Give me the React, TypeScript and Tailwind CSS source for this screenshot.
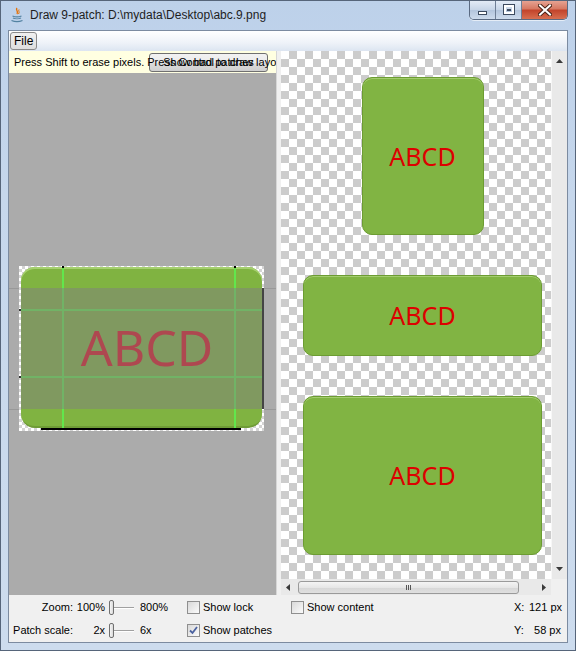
import React from "react";

const checker =
  "bg-[image:conic-gradient(#cccccc_25%,#ffffff_0_50%,#cccccc_0_75%,#ffffff_0)] bg-[length:16px_16px]";

function JavaIcon() {
  return (
    <svg width="14" height="16" viewBox="0 0 14 16">
      <path d="M7 1 C5 3 9 4 7 7" stroke="#e76f00" strokeWidth="1.4" fill="none" />
      <path d="M9 2.5 C8 4 10 5 8.5 7" stroke="#e76f00" strokeWidth="1" fill="none" />
      <path d="M2.5 9 C5 10 9 10 11.5 9" stroke="#5382a1" strokeWidth="1.3" fill="none" />
      <path d="M3 11 C5 12 9 12 11 11" stroke="#5382a1" strokeWidth="1.2" fill="none" />
      <path d="M1.5 13.5 C5 15 9 15 12.5 13.5" stroke="#5382a1" strokeWidth="1.3" fill="none" />
    </svg>
  );
}

function CaptionButtons() {
  return (
    <div className="flex h-[20px] mt-[-1px] rounded-b-[5px] overflow-hidden border border-[#5a6a82] border-t-0 shadow-[0_1px_0_rgba(255,255,255,0.6)]">
      <div className="w-[26px] flex items-center justify-center bg-[linear-gradient(180deg,#e6eef8_0%,#c8d6e8_50%,#b2c4dc_51%,#cddbec_100%)] border-r border-[#6f7f96]">
        <span className="w-[9px] h-[4px] mt-[6px] bg-white border border-[#3c4a5e]" />
      </div>
      <div className="w-[26px] flex items-center justify-center bg-[linear-gradient(180deg,#e6eef8_0%,#c8d6e8_50%,#b2c4dc_51%,#cddbec_100%)] border-r border-[#6f7f96]">
        <span className="w-[10px] h-[9px] border-[2px] border-white outline outline-1 outline-[#3c4a5e] flex items-center justify-center">
          <span className="w-[4px] h-[2px] border border-[#3c4a5e]" />
        </span>
      </div>
      <div className="w-[45px] flex items-center justify-center bg-[linear-gradient(180deg,#e8a898_0%,#d77a64_45%,#c3452c_55%,#d86f50_100%)]">
        <svg width="14" height="12" viewBox="0 0 14 12">
          <path d="M2 1.5 L12 10.5 M12 1.5 L2 10.5" stroke="#4a2418" strokeWidth="4" strokeLinecap="square" />
          <path d="M2 1.5 L12 10.5 M12 1.5 L2 10.5" stroke="#ffffff" strokeWidth="2" strokeLinecap="square" />
        </svg>
      </div>
    </div>
  );
}

function Checkbox({ checked }: { checked?: boolean }) {
  return (
    <span className="w-[13px] h-[13px] border border-[#8f8f8f] bg-[linear-gradient(135deg,#d8d8d8,#fbfbfb)] flex items-center justify-center shrink-0">
      {checked && (
        <svg width="9" height="9" viewBox="0 0 9 9">
          <path d="M1 4.5 L3.5 7 L8 1" stroke="#4b62a0" strokeWidth="1.8" fill="none" />
        </svg>
      )}
    </span>
  );
}

function Slider() {
  return (
    <div className="relative w-[33px] h-[16px] shrink-0">
      <div className="absolute left-[4px] right-[4px] top-[7px] h-[2px] border-t border-[#a0a0a0] border-b border-b-white" />
      <div className="absolute left-[4px] top-0 w-[5px] h-[15px] rounded-[2px] border border-[#707070] bg-[linear-gradient(90deg,#f6f6f6,#dadada)]" />
    </div>
  );
}

function GreenPatch({ className }: { className: string }) {
  return (
    <div
      className={`${className} shrink-0 rounded-[10px] bg-[#81b443] border border-[#6c9c32] shadow-[inset_0_1px_0_#a3cc6e] flex items-center justify-center`}
    >
      <span className="font-['Noto_Sans'] text-[25px] leading-none text-[#dd0000]">ABCD</span>
    </div>
  );
}

function NinePatchCanvas() {
  return (
    <div className="relative overflow-hidden flex-1 bg-[#ababab]">
      <div className="absolute left-0 right-0 top-[215px] h-px bg-[#999999]" />
      <div className="absolute left-0 right-0 top-[336px] h-px bg-[#999999]" />
      <div className="relative mt-[193px] ml-[10px] w-[245px] h-[165px] bg-[image:conic-gradient(#d4d4d4_25%,#ffffff_0_50%,#d4d4d4_0_75%,#ffffff_0)] bg-[length:6px_6px]">
        {/* image */}
        <div className="absolute left-[2px] top-[1px] w-[241px] h-[161px] rounded-[14px] bg-[#80b341] border-b-2 border-[#6f9c36] shadow-[inset_0_2px_0_#a6d070]" />
        <div className="absolute left-[2px] top-[1px] w-[241px] h-[161px] flex items-center justify-center pl-[11px] pb-[1px]">
          <span className="font-['Noto_Sans'] text-[50px] leading-none text-[#dd1020]">ABCD</span>
        </div>
        {/* patch guides */}
        <div className="absolute left-[43px] top-[1px] w-[2px] h-[161px] bg-[#62e64c]" />
        <div className="absolute left-[215px] top-[1px] w-[2px] h-[161px] bg-[#62e64c]" />
        <div className="absolute left-[2px] top-[43px] w-[241px] h-[2px] bg-[#62e64c]" />
        <div className="absolute left-[2px] top-[110px] w-[241px] h-[2px] bg-[#62e64c]" />
        {/* content overlay */}
        <div className="absolute left-[2px] top-[22px] w-[241px] h-[121px] bg-[rgba(128,128,128,0.5)]" />
        {/* border markers */}
        <div className="absolute left-[43px] top-0 w-[2px] h-[2px] bg-black" />
        <div className="absolute left-[215px] top-0 w-[2px] h-[2px] bg-black" />
        <div className="absolute left-0 top-[43px] w-[2px] h-[2px] bg-[#333]" />
        <div className="absolute left-0 top-[110px] w-[2px] h-[2px] bg-[#333]" />
        <div className="absolute left-[243px] top-[22px] w-[2px] h-[121px] bg-[#444]" />
        <div className="absolute left-[22px] top-[162px] w-[200px] h-[2px] bg-black" />
      </div>
    </div>
  );
}

function Arrow({ dir }: { dir: "up" | "down" | "left" | "right" }) {
  const d =
    dir === "up"
      ? "M0 4 L3.5 0 L7 4 Z"
      : dir === "down"
      ? "M0 0 L7 0 L3.5 4 Z"
      : dir === "left"
      ? "M4 0 L4 7 L0 3.5 Z"
      : "M0 0 L4 3.5 L0 7 Z";
  const vertical = dir === "up" || dir === "down";
  return (
    <svg width={vertical ? 7 : 4} height={vertical ? 4 : 7} viewBox={vertical ? "0 0 7 4" : "0 0 4 7"}>
      <path d={d} fill="#3a3a3a" />
    </svg>
  );
}

export default function App() {
  return (
    <div className="w-[576px] h-[651px] flex flex-col bg-[linear-gradient(180deg,#bdd1ea_0%,#c6d7ec_30%,#cddcee_100%)] border border-[#56657a] font-['Liberation_Sans',Arial,sans-serif] text-[11px] text-black overflow-hidden">
      {/* Title bar */}
      <div className="h-[29px] flex items-start shrink-0">
        <div className="flex items-center h-[27px] pl-[9px] gap-[6px]">
          <JavaIcon />
          <span className="text-[12px] text-[#1e1e1e]">Draw 9-patch: D:\mydata\Desktop\abc.9.png</span>
        </div>
        <div className="ml-auto mr-[7px]">
          <CaptionButtons />
        </div>
      </div>

      {/* Client area */}
      <div className="flex-1 mx-[7px] mb-[7px] flex flex-col bg-[#f0f0f0] border border-[#7c8ba0] min-h-0">
        {/* Menu bar */}
        <div className="h-[20px] shrink-0 flex items-center px-[1px] bg-[linear-gradient(180deg,#ffffff_0%,#eef2f8_60%,#dce5f1_100%)]">
          <span className="h-[18px] px-[3px] flex items-center text-[12px] rounded-[3px] border border-[#8a8a8a] bg-[linear-gradient(180deg,#f0f0f0,#dedede)]">
            File
          </span>
        </div>

        {/* Main split */}
        <div className="flex flex-1 min-h-0">
          {/* Left editor */}
          <div className="w-[267px] flex flex-col shrink-0">
            <div className="relative h-[22px] shrink-0 bg-[#ffffe1] flex items-center pl-[5px] overflow-hidden">
              <div className="absolute right-[8px] top-[2px] w-[119px] h-[19px] rounded-[3px] border border-[#707070] bg-[linear-gradient(180deg,#f2f2f2_0%,#ebebeb_50%,#dddddd_51%,#cfcfcf_100%)] flex items-center justify-center">
                Show bad patches
              </div>
              <span className="relative whitespace-nowrap">
                Press Shift to erase pixels. Press Control to draw layout bounds
              </span>
            </div>
            <NinePatchCanvas />
          </div>

          {/* Divider */}
          <div className="w-[5px] shrink-0 bg-[#f0f0f0] border-l border-[#d6d6d6]" />

          {/* Right preview */}
          <div className="flex-1 flex flex-col min-w-0">
            <div className="flex flex-1 min-h-0">
              <div className={`flex-1 overflow-hidden ${checker}`}>
                <div className="w-[283px] flex flex-col items-center pt-[26px] gap-[40px]">
                  <GreenPatch className="w-[122px] h-[158px]" />
                  <GreenPatch className="w-[239px] h-[81px]" />
                  <GreenPatch className="w-[239px] h-[159px]" />
                </div>
              </div>
              <div className="w-[16px] shrink-0 bg-[#e9e9e9] border-l border-[#f7f7f7] flex flex-col items-center justify-between py-[8px]">
                <Arrow dir="up" />
                <Arrow dir="down" />
              </div>
            </div>
            <div className="h-[16px] shrink-0 flex">
              <div className="flex-1 bg-[#e9e9e9] flex items-center px-[5px]">
                <Arrow dir="left" />
                <div className="ml-[8px] w-[221px] h-[13px] rounded-[3px] border border-[#9a9a9a] bg-[linear-gradient(180deg,#f4f4f4_0%,#e6e6e6_50%,#d6d6d6_51%,#e0e0e0_100%)] flex items-center justify-center gap-[1px]">
                  <span className="w-px h-[5px] bg-[#555]" />
                  <span className="w-px h-[5px] bg-[#555]" />
                  <span className="w-px h-[5px] bg-[#555]" />
                </div>
                <div className="flex-1" />
                <Arrow dir="right" />
              </div>
              <div className="w-[16px] bg-[#f0f0f0]" />
            </div>
          </div>
        </div>

        {/* Bottom controls */}
        <div className="h-[47px] shrink-0 flex flex-col pt-px">
          <div className="h-[23px] flex items-center">
            <span className="w-[64px] text-right">Zoom:</span>
            <span className="w-[32px] text-right">100%</span>
            <Slider />
            <span className="w-[49px] pl-[2px]">800%</span>
            <div className="w-[104px] flex items-center gap-[3px]">
              <Checkbox />
              <span>Show lock</span>
            </div>
            <div className="flex items-center gap-[3px]">
              <Checkbox />
              <span>Show content</span>
            </div>
            <div className="ml-auto flex pr-[6px]">
              <span className="w-[15px]">X:</span>
              <span className="w-[32px] text-right whitespace-nowrap">121 px</span>
            </div>
          </div>
          <div className="h-[23px] flex items-center">
            <span className="w-[64px] text-right whitespace-nowrap">Patch scale:</span>
            <span className="w-[32px] text-right">2x</span>
            <Slider />
            <span className="w-[49px] pl-[2px]">6x</span>
            <div className="w-[104px] flex items-center gap-[3px]">
              <Checkbox checked />
              <span>Show patches</span>
            </div>
            <div className="ml-auto flex pr-[6px]">
              <span className="w-[15px]">Y:</span>
              <span className="w-[32px] text-right whitespace-nowrap">58 px</span>
            </div>
          </div>
        </div>
      </div>
    </div>
  );
}
